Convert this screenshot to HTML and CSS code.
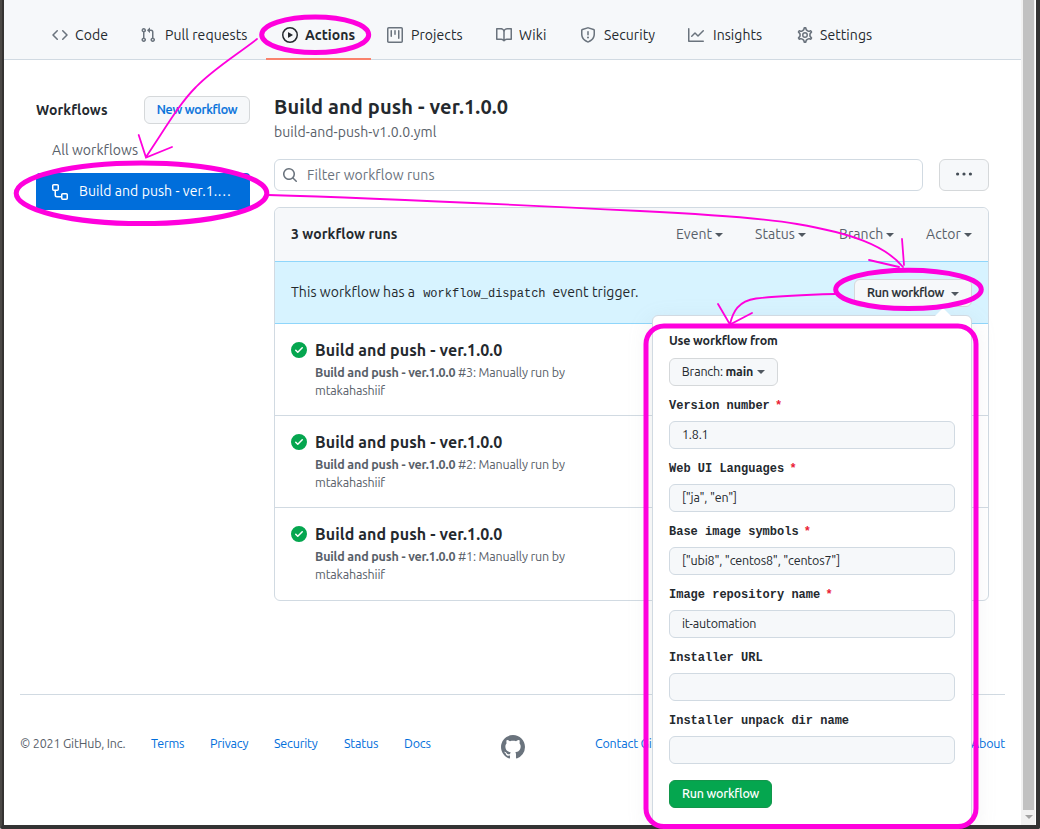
FILE: index.html
```
<!DOCTYPE html>
<html lang="en">
<head>
<meta charset="utf-8">
<title>Actions</title>
<link rel="stylesheet" href="styles.css">
</head>
<body>
<div class="window">
  <div class="page">
    <nav class="tabs">
      <a class="tab tight"><svg class="icon" viewBox="0 0 16 16"><path d="M4.72 3.22a.75.75 0 011.06 1.06L2.06 8l3.72 3.72a.75.75 0 11-1.06 1.06L.47 8.53a.75.75 0 010-1.06l4.25-4.25zm6.56 0a.75.75 0 10-1.06 1.06L13.94 8l-3.72 3.72a.75.75 0 101.06 1.06l4.25-4.25a.75.75 0 000-1.06l-4.25-4.25z"/></svg><span>Code</span></a>
      <a class="tab wide"><svg class="icon" viewBox="0 0 16 16"><path fill-rule="evenodd" d="M7.177 3.073L9.573.677A.25.25 0 0110 .854v4.792a.25.25 0 01-.427.177L7.177 3.427a.25.25 0 010-.354zM3.75 2.5a.75.75 0 100 1.5.75.75 0 000-1.5zm-2.25.75a2.25 2.25 0 113 2.122v5.256a2.251 2.251 0 11-1.5 0V5.372A2.25 2.25 0 011.5 3.25zM11 2.5h-1V4h1a1 1 0 011 1v5.628a2.251 2.251 0 101.5 0V5A2.5 2.5 0 0011 2.5zm1 10.25a.75.75 0 111.5 0 .75.75 0 01-1.5 0zM3.75 12a.75.75 0 100 1.5.75.75 0 000-1.5z"/></svg><span>Pull requests</span></a>
      <a class="tab selected tight"><svg class="icon" viewBox="0 0 16 16"><path fill-rule="evenodd" d="M1.5 8a6.5 6.5 0 1113 0 6.5 6.5 0 01-13 0zM8 0a8 8 0 100 16A8 8 0 008 0zM6.379 5.227A.25.25 0 006 5.442v5.117a.25.25 0 00.379.214l4.264-2.559a.25.25 0 000-.428L6.379 5.227z"/></svg><span>Actions</span></a>
      <a class="tab"><svg class="icon" viewBox="0 0 16 16"><path fill-rule="evenodd" d="M1.75 0A1.75 1.75 0 000 1.75v12.5C0 15.216.784 16 1.75 16h12.5A1.75 1.75 0 0016 14.25V1.75A1.75 1.75 0 0014.25 0H1.75zM1.5 1.75a.25.25 0 01.25-.25h12.5a.25.25 0 01.25.25v12.5a.25.25 0 01-.25.25H1.75a.25.25 0 01-.25-.25V1.75zM11.75 3a.75.75 0 00-.75.75v7.5a.75.75 0 001.5 0v-7.5a.75.75 0 00-.75-.75zm-8.25.75a.75.75 0 011.5 0v5.5a.75.75 0 01-1.5 0v-5.5zM8 3a.75.75 0 00-.75.75v3.5a.75.75 0 001.5 0v-3.5A.75.75 0 008 3z"/></svg><span>Projects</span></a>
      <a class="tab tight"><svg class="icon" viewBox="0 0 16 16"><path fill-rule="evenodd" d="M0 1.75A.75.75 0 01.75 1h4.253c1.227 0 2.317.59 3 1.501A3.744 3.744 0 0111.006 1h4.245a.75.75 0 01.75.75v10.5a.75.75 0 01-.75.75h-4.507a2.25 2.25 0 00-1.591.659l-.622.621a.75.75 0 01-1.06 0l-.622-.621A2.25 2.25 0 005.258 13H.75a.75.75 0 01-.75-.75V1.75zm8.755 3a2.25 2.25 0 012.25-2.25H14.5v9h-3.757c-.71 0-1.4.201-1.992.572l.004-7.322zm-1.504 7.324l.004-5.073-.002-2.253A2.25 2.25 0 005.003 2.5H1.5v9h3.757a3.75 3.75 0 011.994.574z"/></svg><span>Wiki</span></a>
      <a class="tab"><svg class="icon" viewBox="0 0 16 16"><path fill-rule="evenodd" d="M7.467.133a1.75 1.75 0 011.066 0l5.25 1.68A1.75 1.75 0 0115 3.48V7c0 1.566-.32 3.182-1.303 4.682-.983 1.498-2.585 2.813-5.032 3.855a1.7 1.7 0 01-1.33 0c-2.447-1.042-4.049-2.357-5.032-3.855C1.32 10.182 1 8.566 1 7V3.48a1.75 1.75 0 011.217-1.667l5.25-1.68zm.61 1.429a.25.25 0 00-.153 0l-5.25 1.68a.25.25 0 00-.174.238V7c0 1.358.275 2.666 1.057 3.86.784 1.194 2.121 2.34 4.366 3.297a.2.2 0 00.154 0c2.245-.956 3.582-2.104 4.366-3.298C13.225 9.666 13.5 8.36 13.5 7V3.48a.25.25 0 00-.174-.237l-5.25-1.68zM9 10.5a1 1 0 11-2 0 1 1 0 012 0zm-.25-5.75a.75.75 0 10-1.5 0v3a.75.75 0 001.5 0v-3z"/></svg><span>Security</span></a>
      <a class="tab wide"><svg class="icon" viewBox="0 0 16 16"><path d="M1.5 1.75a.75.75 0 00-1.5 0v12.5c0 .414.336.75.75.75h14.5a.75.75 0 000-1.5H1.5V1.75zm14.28 2.53a.75.75 0 00-1.06-1.06L10 7.94 7.53 5.47a.75.75 0 00-1.06 0L3.22 8.72a.75.75 0 001.06 1.06L7 7.06l2.47 2.47a.75.75 0 001.06 0l5.25-5.25z"/></svg><span>Insights</span></a>
      <a class="tab tight"><svg class="icon gear" viewBox="0 0 16 16"><path transform="translate(-.8 -.8) scale(1.1)" d="M7.429 1.525a6.593 6.593 0 011.142 0c.036.003.108.036.137.146l.289 1.105c.147.56.55.967.997 1.189.174.086.341.183.501.29.417.278.97.423 1.53.27l1.102-.303c.11-.03.175.016.195.046.219.31.41.641.573.989.014.031.022.11-.059.19l-.815.806c-.411.406-.562.957-.53 1.456a4.588 4.588 0 010 .582c-.032.499.119 1.05.53 1.456l.815.806c.08.08.073.159.059.19a6.494 6.494 0 01-.573.99c-.02.029-.086.074-.195.045l-1.103-.303c-.559-.153-1.112-.008-1.529.27-.16.107-.327.204-.5.29-.449.222-.851.628-.998 1.189l-.289 1.105c-.029.11-.101.143-.137.146a6.613 6.613 0 01-1.142 0c-.036-.003-.108-.037-.137-.146l-.289-1.105c-.147-.56-.55-.967-.997-1.189a4.502 4.502 0 01-.501-.29c-.417-.278-.97-.423-1.53-.27l-1.102.303c-.11.03-.175-.016-.195-.046a6.492 6.492 0 01-.573-.989c-.014-.031-.022-.11.059-.19l.815-.806c.411-.406.562-.957.53-1.456a4.587 4.587 0 010-.582c.032-.499-.119-1.05-.53-1.456l-.815-.806c-.08-.08-.073-.159-.059-.19a6.44 6.44 0 01.573-.99c.02-.029.086-.075.195-.045l1.103.303c.559.153 1.112.008 1.529-.27.16-.107.327-.204.5-.29.449-.222.851-.628.998-1.189l.289-1.105c.029-.11.101-.143.137-.146z"/><circle cx="8" cy="8" r="2.25"/></svg><span>Settings</span></a>
    </nav>

    <div class="columns">
      <aside class="sidebar">
        <div class="side-head">
          <h2 class="side-title">Workflows</h2>
          <button class="btn new-workflow">New workflow</button>
        </div>
        <a class="side-all">All workflows</a>
        <a class="side-item"><svg class="icon" viewBox="0 0 16 16"><path fill-rule="evenodd" d="M0 1.75C0 .784.784 0 1.75 0h3.5C6.216 0 7 .784 7 1.75v3.5A1.75 1.75 0 015.25 7H4v4a1 1 0 001 1h4v-1.25C9 9.784 9.784 9 10.75 9h3.5c.966 0 1.75.784 1.75 1.75v3.5A1.75 1.75 0 0114.25 16h-3.5A1.75 1.75 0 019 14.25v-.75H5A2.5 2.5 0 012.5 11V7h-.75A1.75 1.75 0 010 5.25v-3.5zm1.75-.25a.25.25 0 00-.25.25v3.5c0 .138.112.25.25.25h3.5a.25.25 0 00.25-.25v-3.5a.25.25 0 00-.25-.25h-3.5zm9 9a.25.25 0 00-.25.25v3.5c0 .138.112.25.25.25h3.5a.25.25 0 00.25-.25v-3.5a.25.25 0 00-.25-.25h-3.5z"/></svg><span>Build and push - ver.1.…</span></a>
      </aside>

      <main class="main">
        <h1 class="title">Build and push - ver.1.0.0</h1>
        <div class="file">build-and-push-v1.0.0.yml</div>
        <div class="search-row">
          <div class="search"><svg class="icon" viewBox="0 0 16 16"><path fill-rule="evenodd" d="M11.5 7a4.499 4.499 0 11-8.998 0A4.499 4.499 0 0111.5 7zm-.82 4.74a6 6 0 111.06-1.06l3.04 3.04a.75.75 0 11-1.06 1.06l-3.04-3.04z"/></svg><span>Filter workflow runs</span></div>
          <button class="btn more"><svg class="icon" viewBox="0 0 16 16"><circle cx="1.6" cy="8" r="1.6"/><circle cx="8" cy="8" r="1.6"/><circle cx="14.4" cy="8" r="1.6"/></svg></button>
        </div>

        <section class="runs">
          <header class="runs-head">
            <strong class="count">3 workflow runs</strong>
            <div class="filters">
              <span class="filter">Event<i class="caret"></i></span>
              <span class="filter">Status<i class="caret"></i></span>
              <span class="filter">Branch<i class="caret"></i></span>
              <span class="filter">Actor<i class="caret"></i></span>
            </div>
          </header>
          <div class="dispatch">
            <p class="dispatch-text"><span>This workflow has a</span><code>workflow_dispatch</code><span>event trigger.</span></p>
            <div class="run-menu">
              <button class="btn run-toggle">Run workflow<i class="caret"></i></button>
              <form class="popover">
                <h3 class="form-title">Use workflow from</h3>
                <button type="button" class="btn branch">Branch:&nbsp;<b>main</b><i class="caret"></i></button>
                <label class="label">Version number <em>*</em></label>
                <div class="input">1.8.1</div>
                <label class="label">Web UI Languages <em>*</em></label>
                <div class="input">["ja", "en"]</div>
                <label class="label">Base image symbols <em>*</em></label>
                <div class="input">["ubi8", "centos8", "centos7"]</div>
                <label class="label">Image repository name <em>*</em></label>
                <div class="input">it-automation</div>
                <label class="label">Installer URL</label>
                <div class="input"></div>
                <label class="label">Installer unpack dir name</label>
                <div class="input"></div>
                <button type="button" class="btn submit">Run workflow</button>
              </form>
            </div>
          </div>
          <article class="run">
            <svg class="icon ok" viewBox="0 0 16 16"><path fill-rule="evenodd" d="M8 16A8 8 0 108 0a8 8 0 000 16zm3.78-9.72a.75.75 0 00-1.06-1.06L6.75 9.19 5.28 7.72a.75.75 0 00-1.06 1.06l2 2a.75.75 0 001.06 0l4.5-4.5z"/></svg>
            <div><h4 class="run-title">Build and push - ver.1.0.0</h4><div class="meta"><b>Build and push - ver.1.0.0</b> #3: Manually run by<br>mtakahashiif</div></div>
          </article>
          <article class="run">
            <svg class="icon ok" viewBox="0 0 16 16"><path fill-rule="evenodd" d="M8 16A8 8 0 108 0a8 8 0 000 16zm3.78-9.72a.75.75 0 00-1.06-1.06L6.75 9.19 5.28 7.72a.75.75 0 00-1.06 1.06l2 2a.75.75 0 001.06 0l4.5-4.5z"/></svg>
            <div><h4 class="run-title">Build and push - ver.1.0.0</h4><div class="meta"><b>Build and push - ver.1.0.0</b> #2: Manually run by<br>mtakahashiif</div></div>
          </article>
          <article class="run">
            <svg class="icon ok" viewBox="0 0 16 16"><path fill-rule="evenodd" d="M8 16A8 8 0 108 0a8 8 0 000 16zm3.78-9.72a.75.75 0 00-1.06-1.06L6.75 9.19 5.28 7.72a.75.75 0 00-1.06 1.06l2 2a.75.75 0 001.06 0l4.5-4.5z"/></svg>
            <div><h4 class="run-title">Build and push - ver.1.0.0</h4><div class="meta"><b>Build and push - ver.1.0.0</b> #1: Manually run by<br>mtakahashiif</div></div>
          </article>
        </section>
      </main>
    </div>

    <footer class="footer">
      <div class="foot-left"><span>© 2021 GitHub, Inc.</span><a>Terms</a><a>Privacy</a><a>Security</a><a>Status</a><a>Docs</a></div>
      <svg class="mark" viewBox="0 0 16 16"><path fill-rule="evenodd" d="M8 0C3.58 0 0 3.58 0 8c0 3.54 2.29 6.53 5.47 7.59.4.07.55-.17.55-.38 0-.19-.01-.82-.01-1.49-2.01.37-2.53-.49-2.69-.94-.09-.23-.48-.94-.82-1.13-.28-.15-.68-.52-.01-.53.63-.01 1.08.58 1.23.82.72 1.21 1.87.87 2.33.66.07-.52.28-.87.51-1.07-1.78-.2-3.64-.89-3.64-3.95 0-.87.31-1.59.82-2.15-.08-.2-.36-1.02.08-2.12 0 0 .67-.21 2.2.82.64-.18 1.32-.27 2-.27.68 0 1.36.09 2 .27 1.53-1.04 2.2-.82 2.2-.82.44 1.1.16 1.92.08 2.12.51.56.82 1.27.82 2.15 0 3.07-1.87 3.75-3.65 3.95.29.25.54.73.54 1.48 0 1.07-.01 1.93-.01 2.2 0 .21.15.46.55.38A8.013 8.013 0 0016 8c0-4.42-3.58-8-8-8z"/></svg>
      <div class="foot-right"><a>Contact Gi</a><a>About</a></div>
    </footer>
  </div>
  <div class="scrollbar"><div class="thumb"></div><div class="arrow"></div></div>
</div>

<svg class="annotations" viewBox="0 0 1040 829">
  <g class="thick">
    <ellipse cx="315.2" cy="34.8" rx="53.5" ry="17.8"/>
    <ellipse cx="141.5" cy="193.3" rx="125.3" ry="30.3"/>
    <ellipse cx="908.5" cy="289.4" rx="72.8" ry="19.2"/>
    <rect x="646" y="326" width="330" height="500.5" rx="18"/>
  </g>
  <g class="thin">
    <path d="M257 39C235 56 212 70 196 87C180 103 168 124 146 157M138.700 135L146 157.5L172 147"/>
    <path d="M268 195C370 198 560 207 640 211C720 215 770 219 797 224C850 233 885 245 903 267M869 260L899 267M902 239L904 265"/>
    <path d="M835 294C800 295 775 296 756 298.5C738 301 733 312 730 324M718 304L730 324.500L752 313"/>
  </g>
</svg>
</body>
</html>
```

FILE: styles.css
```
* { box-sizing: border-box; }
body { margin: 0; width: 1040px; height: 829px; overflow: hidden; position: relative; background: #fff; color: #24292e; font: 14px/20px Ubuntu, "Noto Sans", sans-serif; letter-spacing: .07px; }
h1, h2, h3, h4, p { margin: 0; }
button { font: inherit; letter-spacing: inherit; color: inherit; }

/* window frame */
.window { display: flex; height: 829px; background: #fff; border: 4px solid #333; border-top: 0; border-left: 2px solid #4b4845; border-radius: 0 0 2px 2px; }
.page { width: 1019px; height: 825px; overflow: hidden; border-left: 2px solid #353332; }
.scrollbar { width: 14px; height: 825px; padding: 0 1px 0 2px; background: #f1f1f1; }
.thumb { height: 810px; background: #c1c1c1; }
.arrow { width: 0; margin: 5px auto 0; border: 4px solid transparent; border-top-color: #a3a3a3; border-bottom: 0; }

.icon { width: 16px; height: 16px; flex: none; fill: currentColor; }
.caret { display: inline-block; border: 4px solid transparent; border-top-color: #505860; border-bottom: 0; }

/* repository tabs */
.tabs { display: grid; grid-template-columns: 88px 142px 105px 109px 84px 108px 109px 108px; height: 60px; padding: 10px 0 0 32px; background: #f6f8fa; border-bottom: 1px solid #d1dae2; }
.tab { display: flex; align-items: center; gap: 8px; height: 50px; padding-left: 16px; white-space: nowrap; }
.tab .icon { color: #6a737d; }
.tab.tight { gap: 7px; }
.tab.wide { gap: 9px; }
.tab.selected { font-weight: 700; border-bottom: 2px solid #f9826c; padding-top: 1px; }
.tab.selected .icon { color: #24292e; }
.tab .gear { fill: none; stroke: currentColor; stroke-width: 1.45; }

.columns { display: grid; grid-template-columns: 214px 715px; gap: 24px; padding: 36px 0 0 32px; }

.btn { display: flex; align-items: center; justify-content: center; height: 28px; padding: 0 0 2px; border: 1px solid #d5d8da; border-radius: 6px; background: #f6f8fa; font-size: 12.5px; letter-spacing: -.18px; white-space: nowrap; }

/* sidebar */
.side-head { display: flex; justify-content: space-between; align-items: center; height: 28px; }
.side-title { font-size: 14px; letter-spacing: .1px; }
.new-workflow { width: 106px; color: #006edb; font-weight: 500; -webkit-text-stroke: .2px currentColor; }
.side-all { display: block; margin: 16px 0 0 16px; color: #586069; }
.side-item { display: flex; align-items: center; gap: 11px; height: 37px; margin-top: 13px; padding-left: 16px; border-radius: 4px; background: #006edb; color: #fff; white-space: nowrap; }
.side-item span { padding-bottom: 2px; }

/* main column */
.title { font-size: 20px; line-height: 22px; letter-spacing: .12px; }
.file { margin-top: 4px; color: #586069; letter-spacing: .08px; }
.search-row { display: flex; gap: 16px; margin-top: 17px; }
.search { display: flex; align-items: center; gap: 9px; width: 649px; height: 32px; padding-left: 7px; border: 1px solid #d1dae2; border-radius: 6px; color: #6a737d; }
.more { width: 50px; height: 32px; color: #444d56; }

.runs { height: 394px; margin-top: 16px; border: 1px solid #d1dae2; border-radius: 6px; }
.runs-head { display: flex; justify-content: space-between; align-items: center; height: 53px; padding: 0 0 1px 16px; background: #f6f8fa; border-radius: 6px 6px 0 0; }
.filters { display: grid; grid-template-columns: 79px 84px 87px 62px; color: #586069; }
.filter { display: flex; align-items: center; gap: 3px; }
.filter .caret { margin-top: 1px; }
.dispatch { display: flex; justify-content: space-between; align-items: center; height: 63px; padding: 0 16px; background: #d7f3ff; border: 1px solid #8fd6fb; border-width: 1px 0; }
.dispatch-text { display: flex; align-items: center; padding-bottom: 2px; }
.dispatch code { margin: 4px 7px 0 8px; font: 12px/18px "Liberation Mono", monospace; letter-spacing: 0; }
.run-menu { position: relative; }
.run-toggle { width: 118px; gap: 7px; font-weight: 500; -webkit-text-stroke: .2px currentColor; }
.run-toggle .caret { margin-top: 4px; }

.run { display: flex; gap: 8px; height: 92px; padding: 16px 0 0 16px; border-bottom: 1px solid #d1dae2; }
.run:last-child { border-bottom: 0; }
.ok { margin-top: 2px; color: #05a64f; }
.run-title { font-size: 16px; line-height: 20px; letter-spacing: .1px; }
.meta { margin-top: 3px; color: #586069; font-size: 12.5px; letter-spacing: -.16px; line-height: 18px; white-space: nowrap; }

/* workflow form */
.popover { position: absolute; z-index: 2; top: 36px; right: 0; width: 320px; height: 510px; padding: 14px 16px; background: #fff; border: 1px solid #d1dae2; border-radius: 6px; box-shadow: 0 8px 24px rgba(149, 157, 165, .2); font-size: 12.5px; letter-spacing: -.18px; }
.popover::before { content: ""; position: absolute; top: -8px; right: 20px; border: 8px solid transparent; border-top: 0; border-bottom-color: #fff; }
.form-title { font-size: 12.5px; line-height: 20px; }
.branch { width: 109px; margin: 8px 0 11px; gap: 4px; }
.branch b { margin-left: -4px; }
.branch .caret { margin-top: 2px; }
.label { display: block; height: 18px; margin-bottom: 6px; font: 700 12px/18px "Liberation Mono", monospace; letter-spacing: 0; }
.label em { margin-left: -2px; color: #ea1b35; font-style: normal; }
.input { display: flex; align-items: center; width: 286px; height: 28px; margin-bottom: 11px; padding: 0 0 2px 12px; background: #f6f8fa; border: 1px solid #d1dae2; border-radius: 6px; }
.submit { width: 103px; margin-top: 16px; background: #05a64f; border-color: #12964b; color: #fff; font-weight: 500; }

/* footer */
.footer { display: grid; grid-template-columns: 481px 94px 410px; width: 985px; margin: 93px 0 0 16px; padding-top: 38px; border-top: 1px solid #d1dae2; font-size: 12.5px; line-height: 20px; letter-spacing: -.18px; }
.footer a { color: #006edb; }
.foot-left { display: grid; grid-template-columns: 131px 59px 64px 70px 60px 60px; white-space: nowrap; color: #586069; }
.mark { width: 24px; height: 24px; margin-top: 2px; fill: #6a737d; }
.foot-right { display: flex; justify-content: space-between; }

/* hand-drawn callouts */
.annotations { position: absolute; z-index: 5; left: 0; top: 0; width: 1040px; height: 829px; fill: none; stroke: #f0d; pointer-events: none; }
.thick { stroke-width: 5; }
.thin { stroke-width: 1.8; stroke-linecap: round; }
```
